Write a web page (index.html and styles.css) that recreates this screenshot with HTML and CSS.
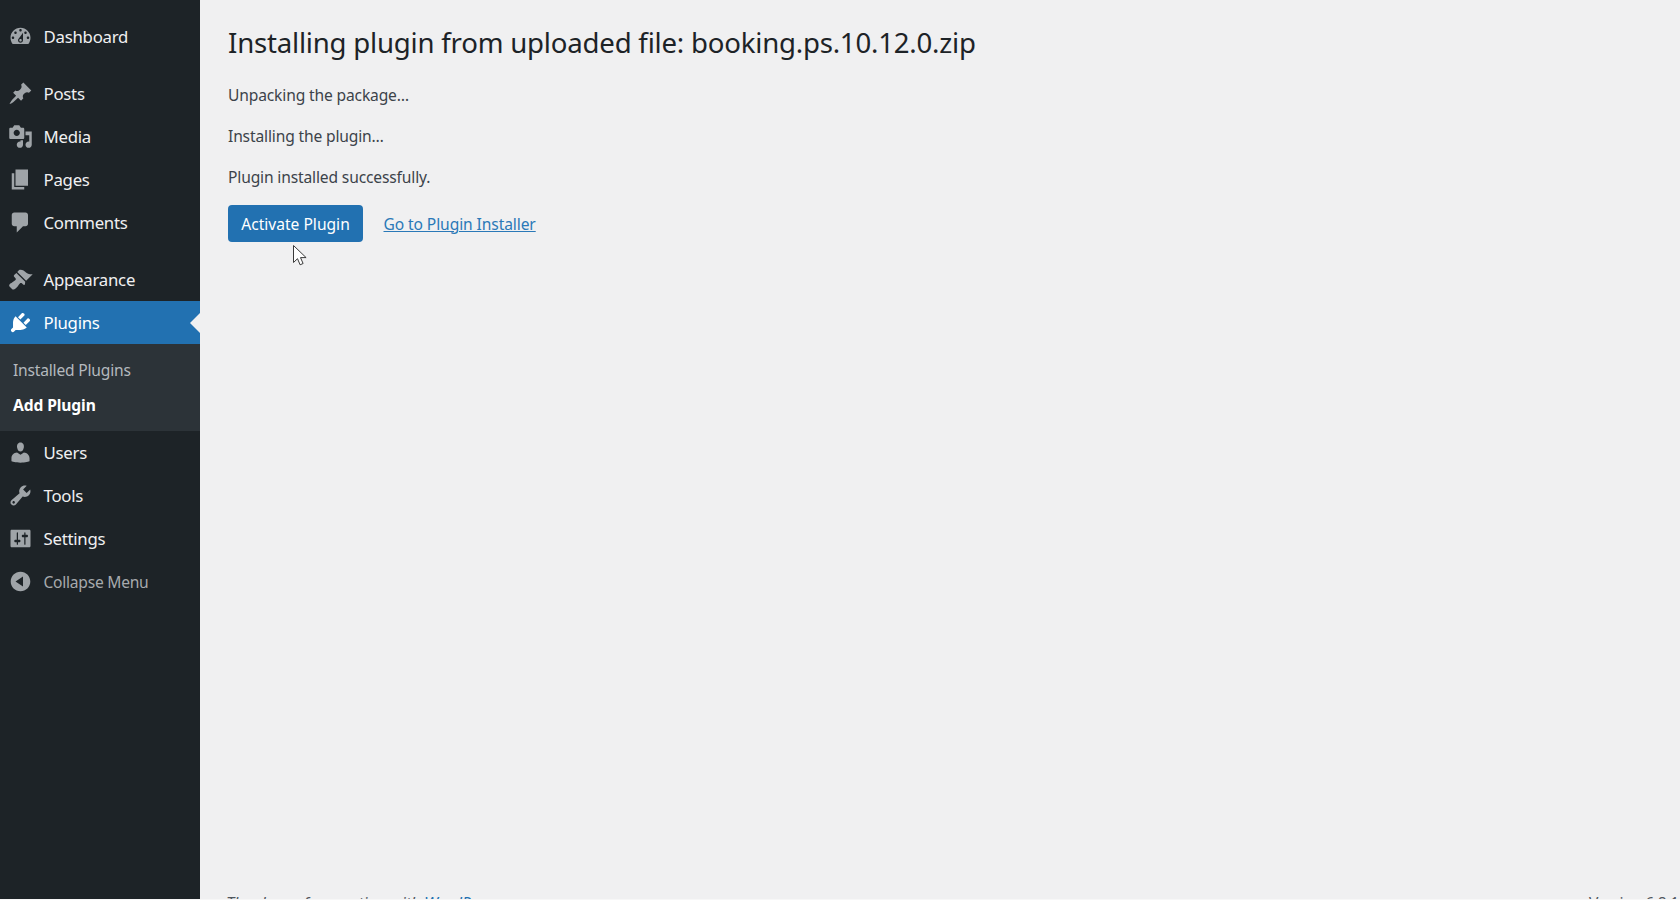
FILE: index.html
```html
<!DOCTYPE html>
<html lang="en">
<head>
<meta charset="utf-8">
<title>Installing Plugin</title>
<link rel="stylesheet" href="styles.css">
</head>
<body>
<div class="app">
  <nav class="sidebar">
    <ul class="menu">
      <li class="item"><svg class="icon" viewBox="0 0 20 20"><path fill-rule="evenodd" d="M3.76 16h12.48c1.1-1.37 1.76-3.11 1.76-5 0-4.42-3.58-8-8-8s-8 3.58-8 8c0 1.89.66 3.63 1.76 5zM10 4c.55 0 1 .45 1 1s-.45 1-1 1-1-.45-1-1 .45-1 1-1zM6 6c.55 0 1 .45 1 1s-.45 1-1 1-1-.45-1-1 .45-1 1-1zm8 0c.55 0 1 .45 1 1s-.45 1-1 1-1-.45-1-1 .45-1 1-1zm-5.37 5.55L12 7v6c0 1.1-.9 2-2 2s-2-.9-2-2c0-.57.24-1.08.63-1.45zM4 10c.55 0 1 .45 1 1s-.45 1-1 1-1-.45-1-1 .45-1 1-1zm12 0c.55 0 1 .45 1 1s-.45 1-1 1-1-.45-1-1 .45-1 1-1zm-5 3c0-.55-.45-1-1-1s-1 .45-1 1 .45 1 1 1 1-.45 1-1z"/></svg><span>Dashboard</span></li>
      <li class="sep"></li>
      <li class="item"><svg class="icon" viewBox="0 0 20 20"><path d="M10.44 3.02l1.82-1.82 6.36 6.35-1.83 1.82c-1.05-.68-2.48-.57-3.41.36l-.75.75c-.92.93-1.04 2.35-.35 3.41l-1.83 1.82-2.41-2.41-2.8 2.79c-.42.42-3.38 2.71-3.8 2.29s1.86-3.39 2.28-3.81l2.79-2.79L4.1 9.36l1.83-1.82c1.05.69 2.48.57 3.4-.36l.75-.75c.93-.92 1.05-2.35.36-3.41z"/></svg><span>Posts</span></li>
      <li class="item"><svg class="icon" viewBox="0 0 20 20"><path fill-rule="evenodd" d="M13 11V4c0-.55-.45-1-1-1h-1.67L9 1H5L3.67 3H2c-.55 0-1 .45-1 1v7c0 .55.45 1 1 1h10c.55 0 1-.45 1-1zM7 4.5c1.38 0 2.5 1.12 2.5 2.5S8.38 9.5 7 9.5 4.5 8.38 4.5 7 5.62 4.5 7 4.5zM14 6h5v10.5c0 1.38-1.12 2.5-2.5 2.5S14 17.88 14 16.5s1.12-2.5 2.5-2.5c.17 0 .34.02.5.05V9h-3V6zm-4 8.05V13h2v3.5c0 1.38-1.12 2.5-2.5 2.5S7 17.88 7 16.5 8.12 14 9.5 14c.17 0 .34.02.5.05z"/></svg><span>Media</span></li>
      <li class="item"><svg class="icon" viewBox="0 0 20 20"><path d="M6 15V2h10v13H6zm-1 1h8v2H3V5h2v11z"/></svg><span>Pages</span></li>
      <li class="item"><svg class="icon" viewBox="0 0 20 20"><path d="M5 2h9c1.1 0 2 .9 2 2v7c0 1.1-.9 2-2 2h-2l-5 5v-5H5c-1.1 0-2-.9-2-2V4c0-1.1.9-2 2-2z"/></svg><span>Comments</span></li>
      <li class="sep"></li>
      <li class="item"><svg class="icon" viewBox="0 0 20 20"><path d="M14.48 11.06L7.41 3.99l1.5-1.5c.5-.56 2.3-.47 3.51.32 1.21.8 1.43 1.28 2.91 2.1 1.18.64 2.45 1.26 4.45.85zm-.71.71L6.7 4.7 4.93 6.47c-.39.39-.39 1.02 0 1.41l1.06 1.06c.39.39.39 1.03 0 1.42-.6.6-1.43 1.11-2.21 1.69-.35.26-.7.53-1.01.84C1.43 13.23.4 14.8 1.2 15.6l2.2 2.2c.8.8 2.37-.23 3.72-1.58.31-.31.58-.66.84-1.01.58-.78 1.09-1.61 1.69-2.21.39-.39 1.03-.39 1.42 0l1.06 1.06c.39.39 1.02.39 1.41 0z"/></svg><span>Appearance</span></li>
      <li class="item item-active"><svg class="icon" viewBox="0 0 20 20"><path d="M13.11 4.36L9.87 7.6 8 5.73l3.24-3.24c.35-.34 1.05-.2 1.56.32.52.51.66 1.21.31 1.55zm-8 1.77l.91-1.12 9.01 9.01-1.19.84c-.71.71-2.63 1.16-3.82 1.16H6.14L4.9 17.26c-.59.59-1.54.59-2.12 0-.59-.58-.59-1.53 0-2.12l1.24-1.24v-3.88c0-1.13.4-3.19 1.09-3.89zm7.26 3.97l3.24-3.24c.34-.35 1.04-.21 1.55.31.52.51.66 1.21.31 1.55l-3.24 3.25z"/></svg><span>Plugins</span></li>
      <li class="submenu">
        <div class="sub-item">Installed Plugins</div>
        <div class="sub-item sub-current">Add Plugin</div>
      </li>
      <li class="item"><svg class="icon" viewBox="0 0 20 20"><path d="M10 9.25c-2.27 0-2.73-3.44-2.73-3.44C7 4.02 7.82 2 9.97 2c2.16 0 2.98 2.02 2.71 3.81 0 0-.41 3.44-2.68 3.44zm0 2.57L12.72 10c2.39 0 4.52 2.33 4.52 4.53v2.49s-3.65 1.13-7.24 1.13c-3.65 0-7.24-1.13-7.24-1.13v-2.49c0-2.25 1.94-4.48 4.47-4.48z"/></svg><span>Users</span></li>
      <li class="item"><svg class="icon" viewBox="0 0 20 20"><path fill-rule="evenodd" d="M16.68 9.77c-1.34 1.34-3.3 1.67-4.95.99l-5.41 6.52c-.99.99-2.59.99-3.58 0s-.99-2.59 0-3.57l6.52-5.42c-.68-1.65-.35-3.61.99-4.95 1.28-1.28 3.12-1.62 4.72-1.06l-2.89 2.89 2.82 2.82 2.86-2.87c.53 1.58.18 3.39-1.08 4.67zM3.81 16.21c.4.39 1.04.39 1.43 0 .4-.4.4-1.04 0-1.43-.39-.4-1.03-.4-1.43 0-.39.39-.39 1.03 0 1.43z"/></svg><span>Tools</span></li>
      <li class="item"><svg class="icon" viewBox="0 0 20 20"><path fill-rule="evenodd" d="M18 16V4c0-.55-.45-1-1-1H3c-.55 0-1 .45-1 1v12c0 .55.45 1 1 1h14c.55 0 1-.45 1-1zM8 11h1c.55 0 1 .45 1 1s-.45 1-1 1H8v1.5c0 .28-.22.5-.5.5s-.5-.22-.5-.5V13H6c-.55 0-1-.45-1-1s.45-1 1-1h1V5.5c0-.28.22-.5.5-.5s.5.22.5.5V11zm5-2h-1c-.55 0-1-.45-1-1s.45-1 1-1h1V5.5c0-.28.22-.5.5-.5s.5.22.5.5V7h1c.55 0 1 .45 1 1s-.45 1-1 1h-1v5.5c0 .28-.22.5-.5.5s-.5-.22-.5-.5V9z"/></svg><span>Settings</span></li>
      <li class="item item-collapse"><svg class="icon" viewBox="0 0 20 20"><path fill-rule="evenodd" d="M10 2.16c4.33 0 7.84 3.51 7.84 7.84s-3.51 7.84-7.84 7.84S2.16 14.33 2.16 10 5.67 2.16 10 2.16zM12 14V6l-6 4z"/></svg><span>Collapse Menu</span></li>
    </ul>
  </nav>
  <main class="main">
    <div class="content">
      <h1 class="title">Installing plugin from uploaded file: booking.ps.10.12.0.zip</h1>
      <p class="line">Unpacking the package…</p>
      <p class="line">Installing the plugin…</p>
      <p class="line">Plugin installed successfully.</p>
      <div class="actions">
        <a class="button">Activate Plugin</a>
        <a class="link">Go to Plugin Installer</a>
      </div>
    </div>
    <footer class="footer">
      <span class="thanks">Thank you for creating with <a class="footer-link">WordPress</a>.</span>
      <span class="version">Version 6.8.1</span>
    </footer>
  </main>
</div>
<svg class="cursor" viewBox="0 0 15 21" width="15" height="21"><path d="M.5.5v17l4-3.8 2.6 6.1 3-1.3-2.6-5.9h5.6z" fill="#fff" stroke="#3a3a3a" stroke-width="1"/></svg>
</body>
</html>
```
FILE: styles.css
```css
* { box-sizing: border-box; }
html, body { margin: 0; padding: 0; height: 900px; overflow: hidden; }
body {
  background: #f7f7f7;
  font-family: "Noto Sans", "Open Sans", sans-serif;
  font-size: 16.25px;
  color: #3c434a;
  position: relative;
}
.app { display: flex; height: 899px; overflow: hidden; background: #f0f0f1; }
.sidebar { width: 200px; flex-shrink: 0; background: #1d2327; padding-top: 15px; }
.menu { list-style: none; margin: 0; padding: 0; }
.item {
  display: flex;
  align-items: center;
  gap: 10.5px;
  height: 43.2px;
  padding-left: 8px;
  font-size: 16.8px;
  letter-spacing: -0.25px;
  color: #f0f0f1;
  position: relative;
}
.icon { width: 25px; height: 25px; fill: #9fa4a8; flex-shrink: 0; }
.sep { height: 13.5px; }
.item-active { background: #2271b1; color: #fff; }
.item-active .icon { fill: #fff; }
.item-active::after {
  content: "";
  position: absolute;
  right: 0;
  top: 50%;
  margin-top: -10px;
  border: 10px solid transparent;
  border-right-color: #f0f0f1;
  border-left-width: 0;
}
.item-collapse { color: #a7aaad; font-size: 15.6px; }
.submenu { background: #2c3338; padding: 8px 0 8px; height: 86.4px; }
.sub-item { height: 35px; padding-left: 13px; display: flex; align-items: center; font-size: 15.6px; letter-spacing: -0.2px; color: #b4b9be; }
.sub-current { color: #fff; font-weight: 700; letter-spacing: -0.1px; }
.main { flex: 1; min-width: 0; display: grid; grid-template-rows: 893px auto; }
.content { padding: 24px 20px 0 28px; }
.title { margin: 0 0 22px; font-size: 27.6px; line-height: 37.4px; font-weight: 400; letter-spacing: -0.21px; color: #1d2327; }
.line { margin: 0 0 16.25px; line-height: 24.4px; font-size: 15.6px; letter-spacing: -0.15px; }
.actions { display: flex; align-items: center; gap: 20.5px; margin-top: 16px; }
.button {
  display: flex; align-items: center; justify-content: center;
  width: 135px; height: 37px;
  background: #2271b1; color: #fff; border-radius: 4px; font-size: 15.6px;
}
.link { color: #2a79b8; text-decoration: underline; font-size: 15.6px; letter-spacing: -0.1px; }
.footer {
  display: flex; justify-content: space-between;
  padding: 0 0 0 26px;
  font-size: 16.25px; line-height: 20px;
  letter-spacing: -0.15px;
  color: #50575e;
}
.thanks { font-style: italic; }
.version { margin-right: 1px; font-size: 15.6px; letter-spacing: -0.3px; }
.footer-link { color: #2271b1; text-decoration: underline; }
.cursor { position: absolute; left: 293px; top: 245px; }
```
